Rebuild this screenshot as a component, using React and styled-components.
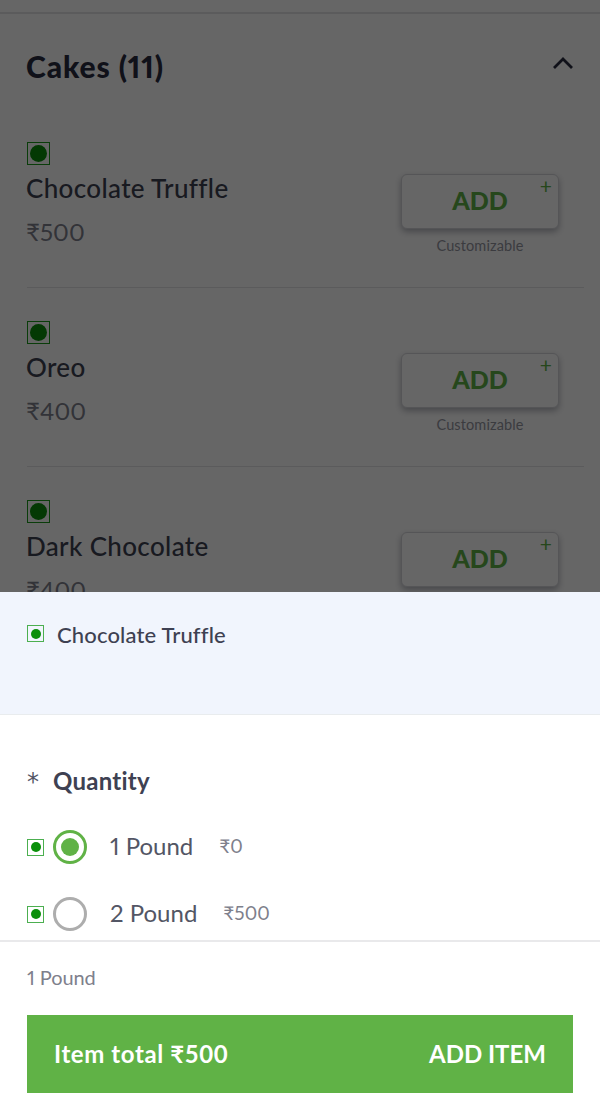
import React from "react";
import styled, { createGlobalStyle } from "styled-components";

const Global = createGlobalStyle`
  html, body { margin: 0; padding: 0; background: #fff; }
  * { box-sizing: border-box; }
  body { font-family: "Lato", "Open Sans", "Noto Sans", sans-serif; font-feature-settings: "pnum" 1; }
`;
const Page = styled.div`
  width: 600px; height: 1106px; overflow: hidden; display: flex; flex-direction: column; background: #fff;
`;
const Menu = styled.div`
  position: relative; height: 592px; flex: none; overflow: hidden; background: #fff; padding-top: 12px;
  &::after { content: ""; position: absolute; inset: 0; background: rgba(0,0,0,.6); }
`;
const Section = styled.section`
  border-top: 2px solid #e4e4e6; padding: 0 16px 0 27px;
`;
const SectionHead = styled.div`
  height: 95px; padding-top: 8px; display: flex; align-items: center; justify-content: space-between;
`;
const SectionTitle = styled.h2`
  margin: 0 0 0 -1px; font-size: 30px; font-weight: 900; color: #282c3f; line-height: 34px; letter-spacing: .9px;
`;
const Chevron = styled.svg`
  width: 24px; height: 24px; margin: 0 9px 6px 0; fill: none; stroke: #282c3f; stroke-width: 2.8;
`;
const Item = styled.div`
  height: 179px; padding-top: 33px; border-bottom: ${p => (p.$last ? "none" : "1px solid #e4e4e6")};
  display: flex; justify-content: space-between;
`;
const ItemInfo = styled.div` display: flex; flex-direction: column; align-items: flex-start; `;
const VegBox = styled.span`
  width: ${p => p.$size}px; height: ${p => p.$size}px; border: 1px solid ${p => p.$line}; flex: none;
  display: flex; align-items: center; justify-content: center;
  &::before { content: ""; width: ${p => p.$dot}px; height: ${p => p.$dot}px; border-radius: 50%; background: ${p => p.$fill}; }
`;
const ItemName = styled.div` margin: 7px 0 0 -1px; font-size: 26px; font-weight: 500; line-height: 32px; color: #3e4152; letter-spacing: .35px; `;
const ItemPrice = styled.div` margin: 13px 0 0 -1px; font-size: 24px; line-height: 30px; color: #7e808c; letter-spacing: .1px; `;
const AddWrap = styled.div` width: 158px; margin: 32px 25px 0 0; display: flex; flex-direction: column; align-items: center; `;
const AddButton = styled.button`
  position: relative; width: 158px; height: 55px; border: 1px solid #d4d5d9; border-radius: 6px; background: #fff;
  box-shadow: 0 3px 6px rgba(40,44,63,.35); font: 900 25px/1 "Lato", sans-serif; color: #60b246; padding: 0 0 2px;
`;
const Plus = styled.span`
  position: absolute; top: 0; right: 6px; font-size: 21px; font-weight: 400; line-height: 21px; color: #60b246;
`;
const Custom = styled.div` margin-top: 8px; font-size: 14.5px; line-height: 18px; color: #93959f; letter-spacing: .12px; `;
const SheetHead = styled.div`
  height: 123px; flex: none; background: #f1f5fd; border-bottom: 1px solid #e9ecee; padding: 33px 27px 0; display: flex; align-items: flex-start; gap: 13px;
`;
const SheetTitle = styled.div` margin-top: -1px; font-size: 22px; line-height: 22px; font-weight: 500; color: #3e4152; letter-spacing: .15px; `;
const Options = styled.div` flex: 1; padding: 51px 27px 0; overflow: hidden; `;
const GroupTitle = styled.div` display: flex; align-items: center; gap: 13px; height: 28px; `;
const Star = styled.span` font: 400 24px/28px "DejaVu Sans", sans-serif; color: #535665; width: 13px; padding-top: 3px; `;
const GroupName = styled.span` font-size: 24px; font-weight: 700; color: #3e4152; letter-spacing: .25px; `;
const Option = styled.div` display: flex; align-items: center; height: 34px; margin-top: ${p => p.$mt}px; `;
const Radio = styled.span`
  width: 34px; height: 34px; border-radius: 50%; margin-left: 9px; flex: none; border: 3px solid ${p => (p.$on ? "#60b246" : "#adadad")};
  display: flex; align-items: center; justify-content: center;
  &::before { content: ""; width: 18px; height: 18px; border-radius: 50%; background: ${p => (p.$on ? "#60b246" : "transparent")}; }
`;
const OptionName = styled.span` margin: 0 0 4px 23px; font-size: 24px; color: #535665; `;
const OptionPrice = styled.span` margin: 0 0 3px 26px; font-size: 19px; color: #7e808c; `;
const Footer = styled.div` height: 166px; flex: none; border-top: 2px solid #e9e9eb; padding: 23px 27px 0; `;
const Selected = styled.div` font-size: 20px; line-height: 24px; color: #7e808c; letter-spacing: -.1px; `;
const Cta = styled.button`
  margin-top: 26px; width: 546px; height: 78px; border: 0; background: #60b246; color: #fff; display: flex; align-items: center; justify-content: space-between;
  padding: 0 27px; font: 700 24px/1 "Lato", sans-serif;
`;
const CtaTotal = styled.span` letter-spacing: .6px; `;

const items = [
  { name: "Chocolate Truffle", price: "₹500" },
  { name: "Oreo", price: "₹400" },
  { name: "Dark Chocolate", price: "₹400", last: true },
];

export default function App() {
  return (
    <Page>
      <Global />
      <Menu>
        <Section>
          <SectionHead>
            <SectionTitle>Cakes (11)</SectionTitle>
            <Chevron viewBox="0 0 24 24"><path d="M3 17 L12 8 L21 17" /></Chevron>
          </SectionHead>
          {items.map(i => (
            <Item key={i.name} $last={i.last}>
              <ItemInfo>
                <VegBox $size={23} $dot={17} $line="#1a9a1a" $fill="#0a8f0a" />
                <ItemName>{i.name}</ItemName>
                <ItemPrice>{i.price}</ItemPrice>
              </ItemInfo>
              <AddWrap>
                <AddButton>ADD<Plus>+</Plus></AddButton>
                <Custom>Customizable</Custom>
              </AddWrap>
            </Item>
          ))}
        </Section>
      </Menu>
      <SheetHead>
        <VegBox $size={17} $dot={10} $line="#4caf50" $fill="#0a8f0a" />
        <SheetTitle>Chocolate Truffle</SheetTitle>
      </SheetHead>
      <Options>
        <GroupTitle><Star>*</Star><GroupName>Quantity</GroupName></GroupTitle>
        <Option $mt={36}>
          <VegBox $size={17} $dot={10} $line="#4caf50" $fill="#0a8f0a" />
          <Radio $on />
          <OptionName>1 Pound</OptionName>
          <OptionPrice>₹0</OptionPrice>
        </Option>
        <Option $mt={33}>
          <VegBox $size={17} $dot={10} $line="#4caf50" $fill="#0a8f0a" />
          <Radio />
          <OptionName>2 Pound</OptionName>
          <OptionPrice>₹500</OptionPrice>
        </Option>
      </Options>
      <Footer>
        <Selected>1 Pound</Selected>
        <Cta><CtaTotal>Item total ₹500</CtaTotal><span>ADD ITEM</span></Cta>
      </Footer>
    </Page>
  );
}
